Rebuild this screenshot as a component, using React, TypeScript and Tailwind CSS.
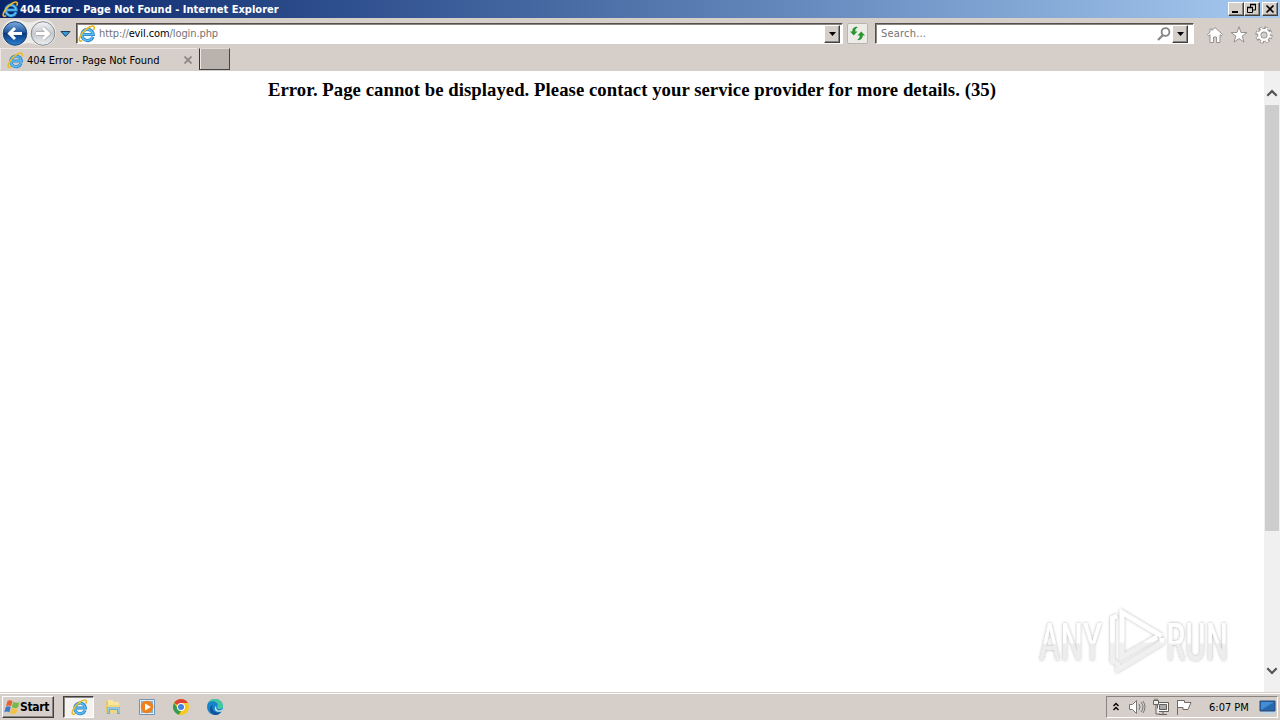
import type { ReactNode } from 'react';
import { clsx } from 'clsx';

const UI_FONT = "font-['Tahoma','DejaVu_Sans_Condensed','DejaVu_Sans',sans-serif] [font-stretch:condensed]";

function IeIcon({ className }: { className?: string }) {
  return (
    <svg viewBox="0 0 18 18" className={clsx('shrink-0', className)} fill="none">
      <path d="M14.900 11.800A5.600 5.600 0 1 1 15.200 9.500H5" stroke="#2583cc" strokeWidth="3.200" />
      <path d="M14.700 11.800A5.500 5.500 0 1 1 15 9.500H5" stroke="#5dbcf0" strokeWidth="1.700" />
      <path d="M4.200 15.600C1.300 17.300.4 15.200 2.100 11.700 4.500 6.800 10.500 1.500 14.300 1.100c2.300-.2 2.300 1.800 1.300 3.900" stroke="#e9bb2d" strokeWidth="1.700" />
    </svg>
  );
}

function WindowButton({ children }: { children: ReactNode }) {
  return (
    <button className="flex h-[14px] w-4 items-center justify-center border border-t-white border-r-[#404040] border-b-[#404040] border-l-white bg-[#d6cec8] shadow-[inset_-1px_-1px_#8a8580]">
      <svg viewBox="0 0 14 12" className="h-3 w-[14px] shrink-0" stroke="#000" fill="none">{children}</svg>
    </button>
  );
}

function TitleBar() {
  return (
    <header className="flex h-[18px] items-center bg-linear-to-r from-[#0a246a] to-[#a6caf0] pr-[2px] pl-[2px]">
      <IeIcon className="h-[17px] w-[17px]" />
      <span className="ml-px pt-px text-[11px] leading-[17px] font-bold whitespace-nowrap text-white">
        404 Error - Page Not Found - Internet Explorer
      </span>
      <div className="ml-auto flex">
        <WindowButton><path d="M3 9h6" strokeWidth="2" /></WindowButton>
        <WindowButton>
          <path d="M5.500 2v2M10.500 2v5H8M2.500 5v4.500h5V5" strokeWidth="1" />
          <path d="M5 1.500h6M2 4.500h6" strokeWidth="1.600" />
        </WindowButton>
        <div className="w-[2px]" />
        <WindowButton><path d="m3.500 2.500 7 7m0-7-7 7" strokeWidth="1.700" /></WindowButton>
      </div>
    </header>
  );
}

function DropButton() {
  return (
    <button className="flex h-[18px] w-4 shrink-0 items-center justify-center border border-t-white border-r-[#404040] border-b-[#404040] border-l-white bg-[#d6cec8] shadow-[inset_-1px_-1px_#8a8580]">
      <svg viewBox="0 0 7 4" className="h-1 w-[7px]"><path d="M0 0h7L3.500 4Z" /></svg>
    </button>
  );
}

function NavButtons() {
  return (
    <svg viewBox="0 0 76 30" className="h-[30px] w-[76px] shrink-0">
      <defs>
        <linearGradient id="back" x2="0" y2="1">
          <stop stopColor="#7eaedf" />
          <stop offset=".43" stopColor="#245a9e" />
          <stop offset=".5" stopColor="#09397d" />
          <stop offset="1" stopColor="#2c82d6" />
        </linearGradient>
        <linearGradient id="forward" x2="0" y2="1">
          <stop stopColor="#f3f4f5" />
          <stop offset=".5" stopColor="#c5c9ce" />
          <stop offset="1" stopColor="#edf0f2" />
        </linearGradient>
      </defs>
      <path d="M15 1.500c8 0 8 3 14 3s7-3 14-3c8 0 13 6 13 13.500S51 28 43 28c-7 0-8-3-14-3s-7 3-14 3C7 28 2 23 2 15S8 1.500 15 1.500" fill="#eeece9" />
      <circle cx="15" cy="15.500" r="11.800" fill="url(#back)" stroke="#1c4273" />
      <circle cx="43" cy="15.500" r="11.800" fill="url(#forward)" stroke="#858b92" />
      <path d="M22 15.500H9.500m5.500-5.500-5.500 5.500 5.500 5.500" fill="none" stroke="#fff" strokeWidth="3" />
      <path d="M36 15.500h12.500m-5.500-5.500 5.500 5.500-5.500 5.500" fill="none" stroke="#a5a9ad" strokeWidth="4.500" />
      <path d="M36 15.500h12.500m-5.500-5.500 5.500 5.500-5.500 5.500" fill="none" stroke="#fff" strokeWidth="3" />
      <path d="M61 13.500h9l-4.500 5Z" fill="#389acf" stroke="#173d69" />
    </svg>
  );
}

function Toolbar() {
  return (
    <div className="flex h-[30px] items-start">
      <NavButtons />
      <div className="mt-[5px] flex h-[21px] w-[767px] items-center border border-t-[#55504b] border-r-white border-b-white border-l-[#55504b] bg-white pr-[2px] pl-px shadow-[inset_1px_1px_#8b8580]">
        <IeIcon className="h-[18px] w-[18px]" />
        <span className="ml-[3px] pt-[2px] text-[11px] tracking-[-0.1px] text-[#737373]">
          http://<span className="text-black">evil.com</span>/login.php
        </span>
        <div className="ml-auto"><DropButton /></div>
      </div>
      <button className="mt-[5px] ml-1 flex h-[21px] w-[21px] items-center justify-center rounded-[2px] border border-[#b9b4ae] bg-[#eeece9]">
        <svg viewBox="0 0 15 15" className="h-[15px] w-[15px]" fill="#28972d">
          <path d="M7 .8C3.500.8 2.300 3 2.300 5.500H0l3.700 4 3.800-4H5.300c0-2 .4-3.200 2.200-3.700Z" />
          <path d="M8 14.200c3.500 0 4.700-2.200 4.700-4.700H15l-3.700-4-3.800 4h2.200c0 2-.4 3.200-2.200 3.700Z" />
        </svg>
      </button>
      <div className="mt-[5px] ml-[7px] flex h-[21px] w-[319px] items-center border border-t-[#55504b] border-r-white border-b-white border-l-[#55504b] bg-white pr-[5px] pl-[5px] shadow-[inset_1px_1px_#8b8580]">
        <span className="pt-[2px] text-[11px] tracking-[0.2px] text-[#737373]">Search...</span>
        <svg viewBox="0 0 14 14" className="mr-px ml-auto h-[14px] w-[14px]" fill="none" stroke="#858585">
          <circle cx="8.500" cy="5" r="3.900" strokeWidth="1.800" />
          <path d="m6 8-5 5" strokeWidth="2.200" />
        </svg>
        <DropButton />
      </div>
      <div className="mt-2 ml-3 flex gap-[7px]">
        <svg viewBox="0 0 18 18" className="h-[18px] w-[18px]" fill="#fff" stroke="#96928e">
          <path d="m9 1.500 7.500 7-1.200 1.300-1.300-1.100v7.800h-3.500V11h-3v5.500H4V8.700L2.700 9.800 1.500 8.500 4 6.100V3h2v1.400Z" />
        </svg>
        <svg viewBox="0 0 18 18" className="-ml-px h-[18px] w-[18px]" fill="#fff" stroke="#96928e">
          <path d="m9 .8 2 5.700h6l-4.800 3.600 1.800 6-5-3.500-5 3.500 1.800-6L1 6.500h6Z" />
        </svg>
        <svg viewBox="0 0 18 18" className="h-[18px] w-[18px]" fill="none">
          <circle cx="9" cy="9" r="6.800" stroke="#96928e" strokeWidth="3.600" strokeDasharray="3.500 1.841" />
          <circle cx="9" cy="9" r="4.700" stroke="#96928e" strokeWidth="4.200" />
          <circle cx="9" cy="9" r="6.500" stroke="#fff" strokeWidth="2.600" strokeDasharray="1.900 3.205" strokeDashoffset="-.8" />
          <circle cx="9" cy="9" r="4.700" stroke="#fff" strokeWidth="2.400" />
        </svg>
      </div>
    </div>
  );
}

function TabBar() {
  return (
    <div className="flex h-[23px]">
      <div className="flex h-[22px] w-[197px] items-center border-t border-l border-white/50 pt-px pr-1 pl-[6px]">
        <IeIcon className="h-[17px] w-[17px]" />
        <span className="ml-[3px] pt-[2px] text-[11px] tracking-[-0.05px] whitespace-nowrap text-black">404 Error - Page Not Found</span>
        <svg viewBox="0 0 8 8" className="mr-px ml-auto h-2 w-2" stroke="#8b8782" strokeWidth="1.800"><path d="m.5.5 7 7m0-7-7 7" /></svg>
      </div>
      <button className="ml-[2px] h-[22px] w-[31px] border border-t-[#e0dad4] border-r-[#444] border-b-[#444] border-l-[#333] bg-[#bab2ad] shadow-[inset_1px_0_#eeeae6]" />
    </div>
  );
}

function Watermark() {
  return (
    <svg viewBox="0 0 206 72" className="absolute right-[39px] bottom-[16px] h-[72px] w-[206px]">
      <defs>
        <linearGradient id="mark" gradientUnits="userSpaceOnUse" x1="0" y1="0" x2="0" y2="72">
          <stop offset=".52" stopColor="#fff" />
          <stop offset=".55" stopColor="#f0f0f0" />
        </linearGradient>
        <linearGradient id="letters" gradientUnits="userSpaceOnUse" x1="0" y1="-55" x2="0" y2="17">
          <stop offset=".52" stopColor="#fff" />
          <stop offset=".55" stopColor="#ededed" />
        </linearGradient>
        <filter id="halo" filterUnits="userSpaceOnUse" x="0" y="0" width="206" height="72">
          <feDropShadow dx="0" dy="0" stdDeviation="1.500" floodColor="#000" floodOpacity=".34" />
        </filter>
      </defs>
      <g filter="url(#halo)">
        <g fill="url(#letters)" fontFamily="Roboto, sans-serif" fontWeight="400" fontSize="52">
          <text transform="translate(4 56) scale(.71 1)">ANY</text>
          <text transform="translate(131 56) scale(.7 1)">RUN</text>
        </g>
        <g fill="none" stroke="url(#mark)" strokeWidth="4.500">
          <path d="M82 12 77.500 14v43l7 4" />
          <path d="M126.500 32 87 8.500V53l35-20" />
          <path d="M83 59v6.500L127 39v-5" />
        </g>
      </g>
    </svg>
  );
}

function ScrollBar() {
  return (
    <div className="flex w-4 flex-col items-center bg-[#f0f0f0]">
      <svg viewBox="0 0 16 34" className="h-[34px] w-4" fill="none" stroke="#555" strokeWidth="2.200"><path d="m3.300 24.800 4.700-4.700 4.700 4.700" /></svg>
      <div className="h-[426px] w-[14px] bg-[#cdcdcd]" />
      <svg viewBox="0 0 16 34" className="mt-auto h-[34px] w-4" fill="none" stroke="#555" strokeWidth="2.200"><path d="m3.300 10.300 4.700 4.700 4.700-4.700" /></svg>
    </div>
  );
}

function PageView() {
  return (
    <main className="relative flex h-[621px] bg-white">
      <div className="flex-1 pt-2 text-center">
        <h1 className="font-['Liberation_Serif',serif] text-[18.720px] leading-[22px] font-bold tracking-[0.05px] text-black">
          Error. Page cannot be displayed. Please contact your service provider for more details. (35)
        </h1>
      </div>
      <ScrollBar />
      <Watermark />
    </main>
  );
}

function TaskBar() {
  return (
    <footer className="flex h-7 items-start border-t border-[#d6cec8] pr-[2px] pl-[2px] shadow-[inset_0_1px_#fff]">
      <button className="mt-[3px] flex h-[22px] w-[52px] items-center border border-t-white border-r-[#404040] border-b-[#404040] border-l-white pl-px shadow-[inset_-1px_-1px_#8a8580]">
        <svg viewBox="0 0 16 16" className="h-4 w-4 shrink-0">
          <path d="M3.500 2q2.500-1.500 5 .3L7 7.500Q4.500 5.500 2 7.200Z" fill="#e66131" />
          <path d="M9.300 2.800q3 2 6.200.2L14 8.300q-3 1.800-6.200-.2Z" fill="#76b84a" />
          <path d="M1.700 8q2.500-1.500 5 .3l-1.400 5.200q-2.500-2-5-.3Z" fill="#3a7acb" />
          <path d="M7.500 8.800q3 2 6.200.2l-1.500 5.300q-3 1.800-6.200-.2Z" fill="#f3c244" />
        </svg>
        <span className="text-[12px] font-bold tracking-[-0.300px] text-black">Start</span>
      </button>
      <button className="mt-[3px] ml-[9px] flex h-[22px] w-[31px] items-center justify-center border border-t-[#404040] border-r-white border-b-white border-l-[#404040] bg-[#f5f3f2] pl-px shadow-[inset_1px_1px_#8a8580]">
        <IeIcon className="h-[17px] w-[17px]" />
      </button>
      <div className="mt-[5px] ml-[10px] flex gap-4">
        <svg viewBox="0 0 18 18" className="h-[18px] w-[18px]">
          <path d="M2 3h6l1 2h6v10H2Z" fill="#e6c467" />
          <path d="M4 2h5l1 2h5v8H4Z" fill="#f8e69c" />
          <path d="M3 7h13v8H3Z" fill="#efd780" />
          <path d="M3 16V9h13v7h-3v-4H6v4Z" fill="#6faecc" />
          <path d="M4 15V10h11v5" fill="none" stroke="#b5dbea" />
        </svg>
        <svg viewBox="0 0 18 18" className="h-[18px] w-[18px]">
          <path d="M1.500 1.500h15v15h-15Z" fill="#e4eff8" stroke="#7194b8" />
          <path d="M3 3h12v12H3Z" fill="#83b6dc" />
          <circle cx="9" cy="9" r="6.200" fill="#ee8119" />
          <path d="m7 5.500 6 3.500-6 3.500Z" fill="#fff" />
        </svg>
        <svg viewBox="0 0 18 18" className="h-[18px] w-[18px]">
          <circle cx="9" cy="9" r="8" fill="#f7c91d" />
          <path d="M9 9 2.100 5A8 8 0 0 1 15.900 5H9Z" fill="#df4132" />
          <path d="M2.100 5 6 11l3 2-2 3.800A8 8 0 0 1 2.100 5" fill="#349b51" />
          <circle cx="9" cy="9" r="4" fill="#fff" />
          <circle cx="9" cy="9" r="3" fill="#4581df" />
        </svg>
        <svg viewBox="0 0 18 18" className="h-[18px] w-[18px]">
          <circle cx="9" cy="9" r="8" fill="#1684ca" />
          <path d="M2 5C5-1 15 0 17 7c1 5-6 5-6 2 3-4-4-8-9-4" fill="#43c7a1" />
          <path d="M7 7c-3 5 3 9 8 7-4 6-12 2-11-4q1-3 3-3" fill="#145197" />
          <path d="M10 8c0 6 4 5 7 3l-1.500 2.500C10 15 7 11 10 8" fill="#d6e2e8" />
        </svg>
      </div>
      <div className="mt-[3px] ml-auto flex h-[22px] w-[172px] items-center border border-t-[#8a8580] border-r-white border-b-white border-l-[#8a8580]">
        <svg viewBox="0 0 6 9" className="mb-[2px] ml-[6px] h-[9px] w-[6px] shrink-0" fill="none" stroke="#000" strokeWidth="1.400"><path d="m.5 4L3 1.500 5.500 4m-5 4L3 5.500 5.500 8" /></svg>
        <svg viewBox="0 0 18 18" className="ml-[9px] h-[18px] w-[18px] shrink-0" fill="none" stroke="#777">
          <path d="M1.500 6.500h3l4-4v13l-4-4h-3Z" fill="#fff" />
          <path d="M11 6q2 3 0 6m2-8q4 5 0 10m2-11q4 6 0 12" />
        </svg>
        <svg viewBox="0 0 18 18" className="ml-[6px] h-[18px] w-[18px] shrink-0" fill="none" stroke="#65615d">
          <path d="M5.500 4.500h11v9h-11Z" fill="#f8f8f8" />
          <path d="M7.500 6.500h7v5h-7Z" fill="#aaa" />
          <path d="M11 14v2m-4 .500h8" />
          <path d="M1.500 2.500v4h5v-4ZM3 .500v2m2-2v2M4 7v9h4" fill="#eee" />
        </svg>
        <svg viewBox="0 0 18 18" className="ml-[5px] h-[18px] w-[18px] shrink-0" fill="#fff" stroke="#706b66">
          <path d="M2.500 2v15m0-14.500h7v2h6.500l-3 7h-5v-2H2.500Z" />
        </svg>
        <span className="ml-4 pt-[2px] text-[11px] whitespace-nowrap text-black">6:07 PM</span>
        <svg viewBox="0 0 17 15" className="mr-px ml-auto h-[15px] w-[17px] shrink-0">
          <path d="M1 1h15v10H1Z" fill="#2767ae" stroke="#204a7b" />
          <path d="M2 2h13L2 10Z" fill="#438dd5" />
          <path d="M4 12h10l2 2H2Z" fill="#b7d4e9" />
        </svg>
      </div>
    </footer>
  );
}

export default function App() {
  return (
    <div className={clsx('flex h-[720px] w-[1280px] flex-col overflow-hidden bg-[#d6cec8]', UI_FONT)}>
      <TitleBar />
      <Toolbar />
      <TabBar />
      <PageView />
      <TaskBar />
    </div>
  );
}
